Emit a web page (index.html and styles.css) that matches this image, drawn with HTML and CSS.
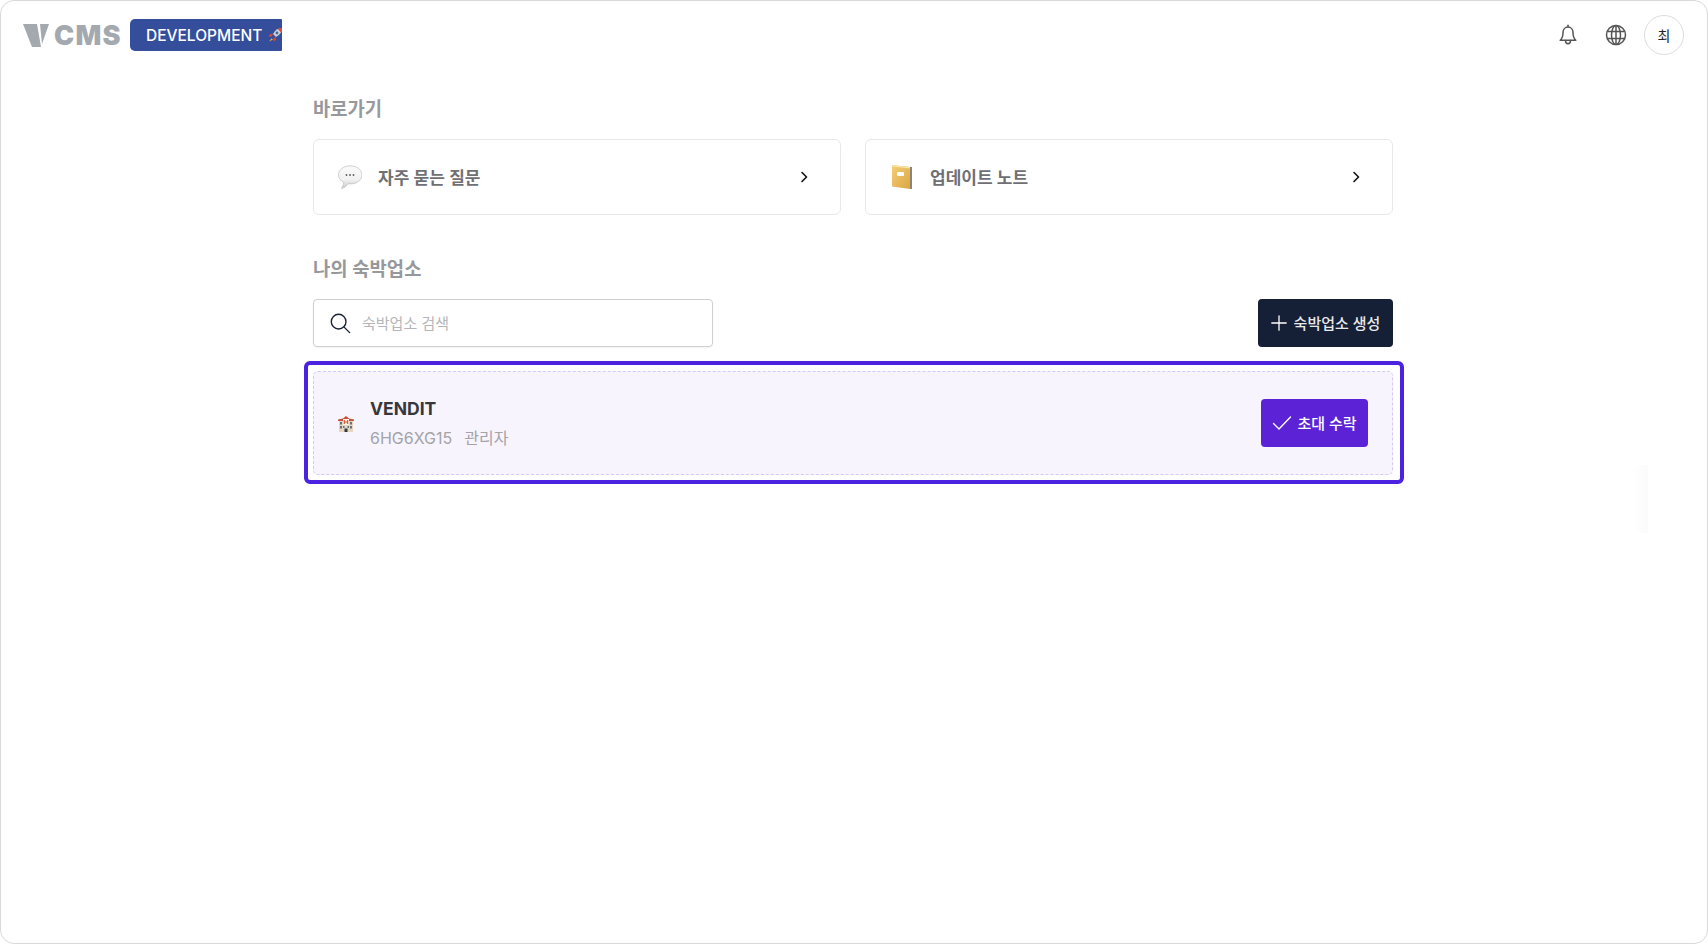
FILE: index.html
```html
<!DOCTYPE html>
<html lang="ko">
<head>
    <meta charset="UTF-8">
    <meta name="viewport" content="width=device-width, initial-scale=1.0">
    <title>VCMS</title>
    <link rel="stylesheet" href="styles.css">
</head>
<body>
    <div class="frame">
        <header class="topbar">
            <div class="brand">
                <div class="logo">
                    <svg class="logo-mark" viewBox="0 0 26 23">
                        <polygon points="0,0 14,0 18,23 9,23" fill="#a4a9b0"></polygon>
                        <polygon points="17,0 26,0 19,20" fill="#a4a9b0"></polygon>
                    </svg>
                    <span class="logo-text">CMS</span>
                </div>
                <div class="env-badge">
                    <span>DEVELOPMENT</span>
                    <svg class="rocket" viewBox="0 0 16 16">
                        <path d="M15 1c-4 0-7 2-9 6l3 3c4-2 6-5 6-9z" fill="#c9ced6"></path>
                        <path d="M15 1c-1.500 0-3 .3-4.200 1l3.200 3.200C14.700 4 15 2.500 15 1z" fill="#d9442f"></path>
                        <circle cx="10" cy="6" r="1.400" fill="#4a6a8c"></circle>
                        <path d="M6 7H3L1.500 9.500 4.500 9.800zM9 10v3l-2.500 1.500-.3-3z" fill="#d9442f"></path>
                        <path d="M4.500 11.500 2 14.500l3-1.500 1-.5z" fill="#f2b632"></path>
                    </svg>
                </div>
            </div>
            <div class="top-actions">
                <button class="icon-btn">
                    <svg viewBox="0 0 24 24" fill="none" stroke="#555" stroke-width="1.500" stroke-linecap="round" stroke-linejoin="round">
                        <path d="M12 4c-3 0-5 2.500-5 5.500 0 4.500-1 6.200-2.800 7.800h15.600c-1.800-1.600-2.800-3.300-2.800-7.800C17 6.500 15 4 12 4z"></path>
                        <path d="M12 2.200V4"></path>
                        <path d="M9.500 17.500c0 2 1.100 3.200 2.500 3.200s2.500-1.200 2.500-3.200"></path>
                    </svg>
                </button>
                <button class="icon-btn">
                    <svg viewBox="0 0 24 24" fill="none" stroke="#555" stroke-width="1.500">
                        <circle cx="12" cy="12" r="9.500"></circle>
                        <ellipse cx="12" cy="12" rx="4.500" ry="9.500"></ellipse>
                        <path d="M12 2.500v19M3.300 8.500h17.400M3.300 15.500h17.400"></path>
                    </svg>
                </button>
                <div class="avatar">최</div>
            </div>
        </header>

        <main class="content">
            <section class="shortcuts">
                <h2 class="section-title">바로가기</h2>
                <div class="shortcut-grid">
                    <a class="shortcut-card">
                        <svg class="shortcut-icon" viewBox="0 0 24 24">
                            <defs>
                                <linearGradient id="bubbleFill" x1="0" y1="0" x2="0" y2="1">
                                    <stop offset="0" stop-color="#fafafa"></stop>
                                    <stop offset=".6" stop-color="#f2f2f2"></stop>
                                    <stop offset="1" stop-color="#c9c9c9"></stop>
                                </linearGradient>
                                <linearGradient id="bookFill" x1="0" y1="0" x2="1" y2="1">
                                    <stop offset="0" stop-color="#f3cf76"></stop>
                                    <stop offset="1" stop-color="#dca544"></stop>
                                </linearGradient>
                            </defs>
                            <path d="M12 .8C5.600.8.500 4.800.500 9.800c0 3.200 2.100 6 5.300 7.600-.3 2.200-1.100 4.400-2.300 6.100 3-.7 5.200-2.600 6.500-4.800.8.100 1.600.2 2.500.2 6.400 0 11.500-4 11.500-9.100S18.400.8 12 .8z" fill="url(#bubbleFill)" stroke="#bdbdbd" stroke-width=".7"></path>
                            <circle cx="8.500" cy="10" r=".9" fill="#5a5a5a"></circle>
                            <circle cx="12" cy="10" r=".9" fill="#5a5a5a"></circle>
                            <circle cx="15.500" cy="10" r=".9" fill="#5a5a5a"></circle>
                        </svg>
                        <span class="shortcut-label">자주 묻는 질문</span>
                        <svg class="chevron" viewBox="0 0 12 12" fill="none" stroke="#111" stroke-width="1.600" stroke-linecap="round" stroke-linejoin="round">
                            <path d="M4 1.500 8.500 6 4 10.500"></path>
                        </svg>
                    </a>
                    <a class="shortcut-card">
                        <svg class="shortcut-icon" viewBox="0 0 24 24">
                            <path d="M2 0 20 2V24L2 21.500z" fill="url(#bookFill)"></path>
                            <path d="M20 2h2V24H20z" fill="#8c8576"></path>
                            <path d="M2 0 20 2V3.500L2 1.500z" fill="#f8e2a6"></path>
                            <rect x="7" y="7" width="7" height="4" rx="1" fill="#fff"></rect>
                        </svg>
                        <span class="shortcut-label">업데이트 노트</span>
                        <svg class="chevron" viewBox="0 0 12 12" fill="none" stroke="#111" stroke-width="1.600" stroke-linecap="round" stroke-linejoin="round">
                            <path d="M4 1.500 8.500 6 4 10.500"></path>
                        </svg>
                    </a>
                </div>
            </section>

            <section class="properties">
                <h2 class="section-title">나의 숙박업소</h2>
                <div class="toolbar">
                    <label class="search-box">
                        <svg viewBox="0 0 24 24" fill="none" stroke="#1a2238" stroke-width="1.500" stroke-linecap="round">
                            <circle cx="10.500" cy="10.500" r="8"></circle>
                            <path d="M16.500 16.500l6 6"></path>
                        </svg>
                        <input type="text" placeholder="숙박업소 검색">
                    </label>
                    <button class="create-btn">
                        <svg viewBox="0 0 16 16" fill="none" stroke="#fff" stroke-width="1.300" stroke-linecap="round">
                            <path d="M8 .8v14.400M.8 8h14.400"></path>
                        </svg>
                        <span>숙박업소 생성</span>
                    </button>
                </div>
                <div class="highlight">
                    <div class="property-card">
                        <svg class="hotel-icon" viewBox="0 0 16 17">
                            <rect x="1" y="4" width="14" height="13" fill="#e6d6c0"></rect>
                            <path d="M0 4.500 5 3.500 8 1l3 2.500 5 1V6H0z" fill="#c8503a"></path>
                            <rect x="5" y="4" width="6" height="6" fill="#f7f1e6"></rect>
                            <path d="M6.300 5v4M9.700 5v4M6.300 7h3.400" stroke="#e0502f" stroke-width="1.100" fill="none"></path>
                            <path d="M2 7h2v2.500H2zM12 7h2v2.500h-2zM2 11h2v2.500H2zM12 11h2v2.500h-2zM5 11h1.500v2H5zM9.500 11H11v2H9.500z" fill="#66727c"></path>
                            <rect x="6.500" y="13.500" width="3" height="3.500" fill="#2f3a44"></rect>
                        </svg>
                        <div class="property-info">
                            <div class="property-name">VENDIT</div>
                            <div class="property-meta">
                                <span>6HG6XG15</span>
                                <span>관리자</span>
                            </div>
                        </div>
                        <button class="accept-btn">
                            <svg viewBox="0 0 20 20" fill="none" stroke="#fff" stroke-width="1.400" stroke-linecap="round" stroke-linejoin="round">
                                <path d="M1.500 10.500 7 16 18.500 4"></path>
                            </svg>
                            <span>초대 수락</span>
                        </button>
                    </div>
                </div>
            </section>
        </main>
        <div class="edge-shade"></div>
    </div>
</body>
</html>
```

FILE: styles.css
```css
/* General Styles */
* {
    box-sizing: border-box;
}

body {
    margin: 0;
    height: 100vh;
    overflow: hidden;
    background-color: #ffffff;
    font-family: Inter, "Noto Sans CJK KR", sans-serif;
    color: #333333;
}

.frame {
    position: relative;
    height: 944px;
    border: 1px solid #d9d9d9;
    border-radius: 14px;
    background-color: #ffffff;
}

/* faint leftover shadow on the right side of the page */
.edge-shade {
    position: absolute;
    top: 464px;
    left: 1631px;
    width: 16px;
    height: 68px;
    border-radius: 100% 0 0 100%;
    background: linear-gradient(90deg, #ffffff, #fbfbfb);
}

/* Header */
.topbar {
    display: flex;
    justify-content: space-between;
    align-items: center;
    height: 68px;
    padding: 0 23px 0 22px;
}

.brand {
    display: flex;
    align-items: center;
    gap: 8px;
}

.logo {
    display: flex;
    align-items: center;
    gap: 5px;
    width: 99px;
}

.logo-mark {
    flex: none;
    width: 26px;
    height: 23px;
}

.logo-text {
    font-family: Inter, sans-serif;
    font-size: 27px;
    line-height: 23px;
    font-weight: 900;
    letter-spacing: 1.2px;
    color: #a4a9b0;
}

.env-badge {
    display: flex;
    align-items: center;
    gap: 5px;
    width: 152px;
    height: 32px;
    padding-left: 16px;
    overflow: hidden;
    border-radius: 5px 1px 1px 5px;
    background-color: #344e9c;
    color: #ffffff;
    font-size: 15.5px;
    font-weight: 500;
    white-space: nowrap;
}

.rocket {
    flex: none;
    width: 16px;
    height: 16px;
}

.top-actions {
    display: flex;
    align-items: center;
}

.icon-btn {
    display: flex;
    justify-content: center;
    align-items: center;
    width: 24px;
    height: 24px;
    margin-right: 24px;
    padding: 0;
    border: none;
    background: transparent;
}

.icon-btn svg {
    width: 24px;
    height: 24px;
}

.icon-btn + .avatar {
    margin-left: -8px;
}

.avatar {
    display: flex;
    justify-content: center;
    align-items: center;
    width: 40px;
    height: 40px;
    border: 1px solid #dddddd;
    border-radius: 50%;
    font-size: 14px;
    color: #222222;
}

/* Content */
.content {
    width: 1080px;
    margin-left: 312px;
    padding-top: 28px;
}

.section-title {
    margin: 0;
    font-size: 18.8px;
    line-height: 26px;
    font-weight: 600;
    color: #97989c;
}

.shortcut-grid {
    display: grid;
    grid-template-columns: 1fr 1fr;
    gap: 24px;
    margin-top: 16px;
}

.shortcut-card {
    display: flex;
    align-items: center;
    height: 76px;
    padding: 0 30px 0 24px;
    border: 1px solid #e8e8e8;
    border-radius: 6px;
}

.shortcut-icon {
    flex: none;
    width: 24px;
    height: 24px;
    margin-right: 16px;
}

.shortcut-label {
    flex: 1;
    padding-bottom: 2px;
    font-size: 17px;
    font-weight: 600;
    color: #707074;
}

.chevron {
    width: 12px;
    height: 12px;
}

.properties {
    margin-top: 42px;
}

.toolbar {
    display: flex;
    justify-content: space-between;
    align-items: center;
    margin-top: 16px;
}

.search-box {
    display: flex;
    align-items: center;
    gap: 9px;
    width: 400px;
    height: 48px;
    padding: 0 15px;
    border: 1px solid #cfcfcf;
    border-radius: 4px;
    box-shadow: 0 1px 2px rgba(0, 0, 0, 0.05);
}

.search-box svg {
    flex: none;
    width: 22px;
    height: 22px;
}

.search-box input {
    flex: 1;
    min-width: 0;
    border: none;
    outline: none;
    font-family: inherit;
    font-size: 15px;
    color: #333333;
}

.search-box input::placeholder {
    color: #b5b5b8;
}

.create-btn {
    display: flex;
    justify-content: center;
    align-items: center;
    gap: 7px;
    width: 135px;
    height: 48px;
    padding: 0;
    border: none;
    border-radius: 4px;
    background-color: #151f36;
    color: #e9e9ec;
    font-family: inherit;
    font-size: 15px;
    font-weight: 500;
}

.create-btn span,
.accept-btn span {
    padding-bottom: 2px;
}

.create-btn svg {
    width: 16px;
    height: 16px;
}

/* Highlighted property */
.highlight {
    margin: 14px -11px 0 -9px;
    padding: 6px 7px 5px 5px;
    border: 4px solid #4a22e0;
    border-radius: 6px;
}

.property-card {
    display: flex;
    align-items: center;
    height: 104px;
    padding: 0 24px;
    border: 1px dashed #d6c8f8;
    border-radius: 5px;
    background-color: #f7f4fe;
}

.hotel-icon {
    flex: none;
    width: 16px;
    height: 17px;
    margin-right: 16px;
}

.property-info {
    flex: 1;
}

.property-name {
    font-size: 17.5px;
    line-height: 24px;
    font-weight: 700;
    color: #38383c;
}

.property-meta {
    display: flex;
    gap: 12px;
    margin-top: 6px;
    font-size: 16px;
    line-height: 22px;
    color: #a3a3a8;
}

.accept-btn {
    display: flex;
    justify-content: center;
    align-items: center;
    gap: 5px;
    width: 107px;
    height: 48px;
    padding: 0;
    border: none;
    border-radius: 4px;
    background-color: #5c22d6;
    color: #ffffff;
    font-family: inherit;
    font-size: 15px;
    font-weight: 500;
}

.accept-btn svg {
    width: 20px;
    height: 20px;
}
```
